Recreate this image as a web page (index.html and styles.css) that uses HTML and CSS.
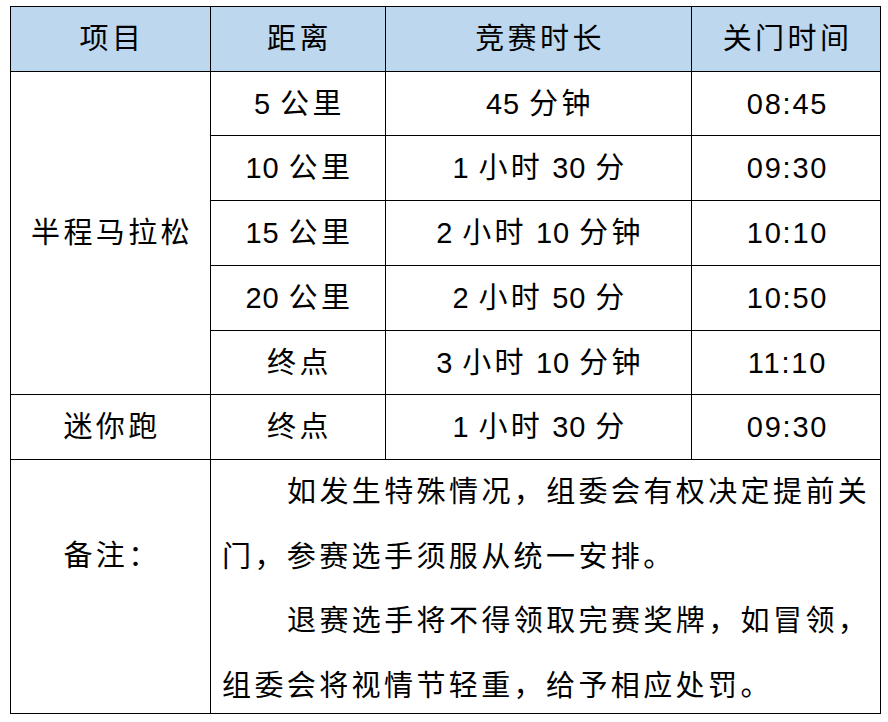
FILE: index.html
```html
<!DOCTYPE html>
<html lang="zh-CN">
<head>
<meta charset="utf-8">
<link rel="stylesheet" href="styles.css">
</head>
<body>
<table class="schedule">
  <colgroup>
    <col class="c1"><col class="c2"><col class="c3"><col class="c4">
  </colgroup>
  <thead>
    <tr class="r65">
      <th>项目</th><th>距离</th><th>竞赛时长</th><th>关门时间</th>
    </tr>
  </thead>
  <tbody>
    <tr class="r64">
      <td rowspan="5">半程马拉松</td>
      <td><span class="n">5 </span>公里</td>
      <td><span class="n">45 </span>分钟</td>
      <td><span class="t">08:45</span></td>
    </tr>
    <tr class="r65">
      <td><span class="n">10 </span>公里</td>
      <td><span class="n">1 </span>小时<span class="n"> 30 </span>分</td>
      <td><span class="t">09:30</span></td>
    </tr>
    <tr class="r65">
      <td><span class="n">15 </span>公里</td>
      <td><span class="n">2 </span>小时<span class="n"> 10 </span>分钟</td>
      <td><span class="t">10:10</span></td>
    </tr>
    <tr class="r65">
      <td><span class="n">20 </span>公里</td>
      <td><span class="n">2 </span>小时<span class="n"> 50 </span>分</td>
      <td><span class="t">10:50</span></td>
    </tr>
    <tr class="r64">
      <td>终点</td>
      <td><span class="n">3 </span>小时<span class="n"> 10 </span>分钟</td>
      <td><span class="t">11:10</span></td>
    </tr>
    <tr class="r65">
      <td>迷你跑</td>
      <td>终点</td>
      <td><span class="n">1 </span>小时<span class="n"> 30 </span>分</td>
      <td><span class="t">09:30</span></td>
    </tr>
    <tr class="rnote">
      <td class="note-label">备注：</td>
      <td colspan="3" class="note-text">
        <div class="note-body">
          <p>如发生特殊情况，组委会有权决定提前关门，参赛选手须服从统一安排。</p>
          <p>退赛选手将不得领取完赛奖牌，如冒领，组委会将视情节轻重，给予相应处罚。</p>
        </div>
      </td>
    </tr>
  </tbody>
</table>
</body>
</html>
```

FILE: styles.css
```css
html, body {
  margin: 0;
  padding: 0;
  background: #ffffff;
}

body {
  padding: 6px 0 0 10px;
}

.schedule {
  border-collapse: collapse;
  table-layout: fixed;
  width: 870px;
  font-family: "Liberation Sans", "Noto Sans CJK SC", sans-serif;
  font-size: 29px;
  color: #000;
}

.c1 { width: 200px; }
.c2 { width: 175px; }
.c3 { width: 306px; }
.c4 { width: 189px; }

.schedule th,
.schedule td {
  border: 1px solid #000;
  padding: 0 0 0 3px;
  text-align: center;
  vertical-align: middle;
  font-weight: normal;
  letter-spacing: 3.4px;
  line-height: 40px;
}

.schedule th {
  background: #bdd7ee;
}

.n {
  letter-spacing: 0.9px;
}

.t {
  letter-spacing: 1.8px;
}

.r65 { height: 65px; }
.r64 { height: 64px; }
.rnote { height: 254px; }

.schedule td.note-label {
  vertical-align: top;
  padding-top: 64px;
  line-height: 64px;
}

.schedule td.note-text {
  text-align: left;
  vertical-align: top;
  padding: 0 0 0 11px;
  line-height: 64.6px;
}

.note-body {
  height: 253px;
}

.note-body p {
  margin: 0;
  text-indent: 65px;
}
```
